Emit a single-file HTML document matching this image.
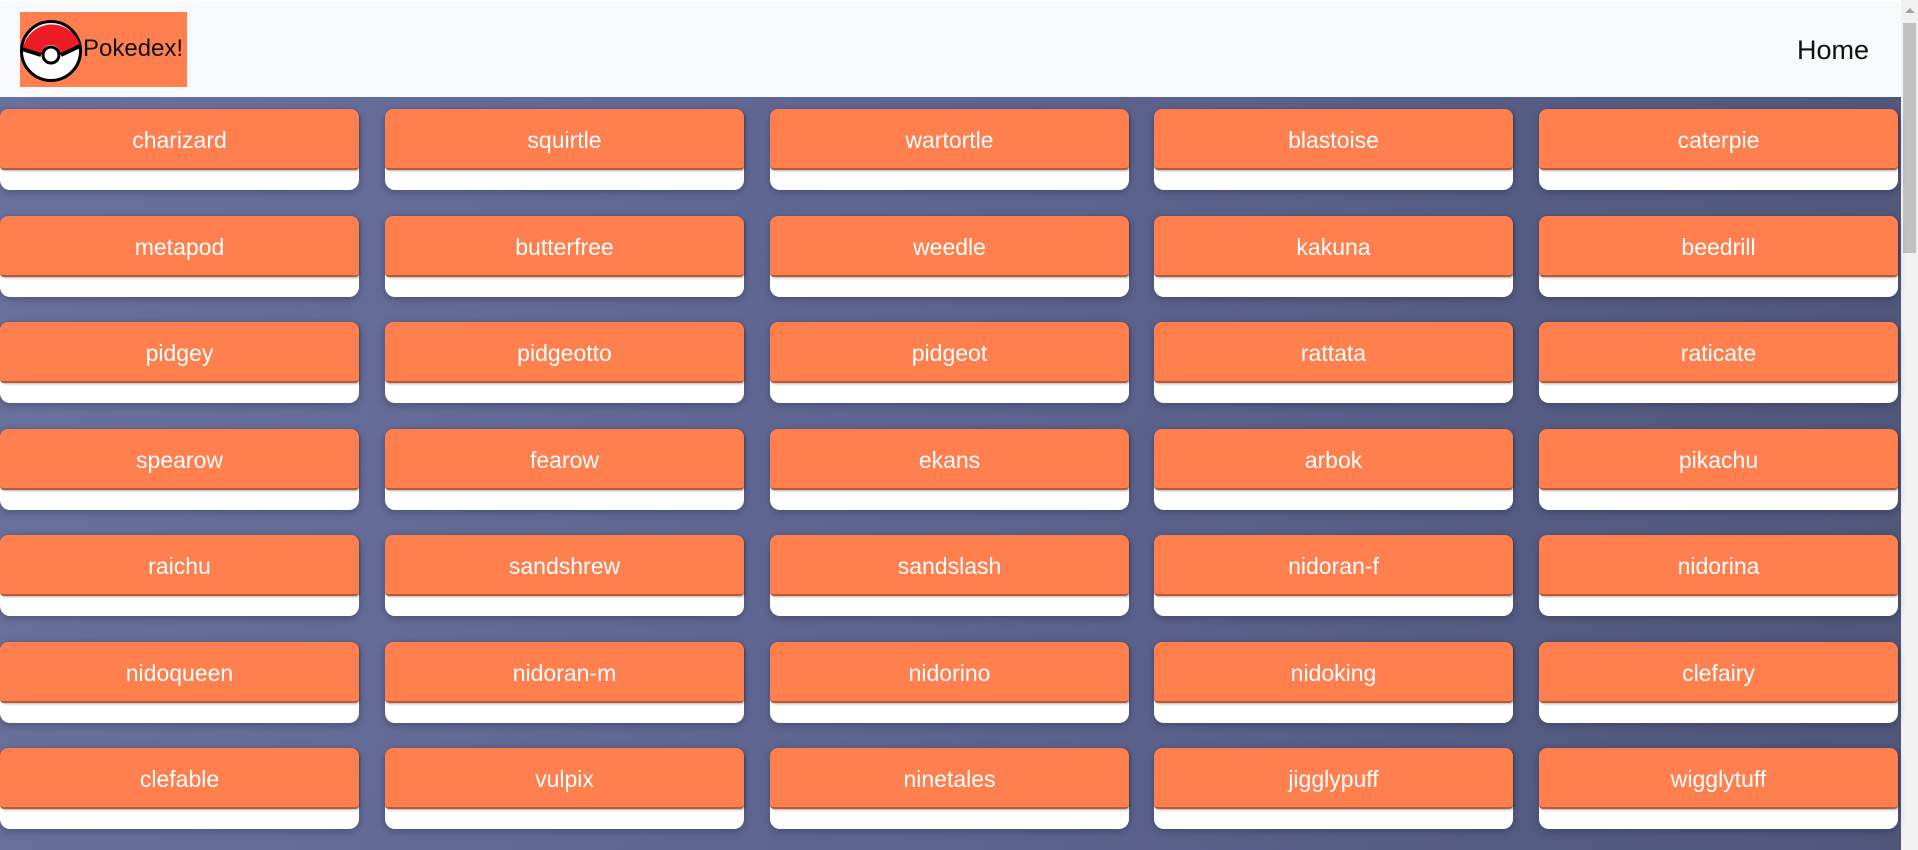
<!DOCTYPE html>
<html><head><meta charset="utf-8"><style>
*{margin:0;padding:0;box-sizing:border-box}
html,body{width:1918px;height:850px;overflow:hidden;font-family:"Liberation Sans",Arial,sans-serif}
body{background:linear-gradient(100deg,#69719d 0%,#5d6490 50%,#4f5679 100%);position:relative}
.nav{position:absolute;left:0;top:0;width:1901px;height:97px;background:#f8f9fa;border-top:2px solid #fff}
.logo{position:absolute;left:20px;top:10px;width:167px;height:75px;background:#ff7f4f}
.logo svg{position:absolute;left:0;top:5px}
.logo span{position:absolute;left:63px;top:23px;font-size:24px;color:#111}
.home{position:absolute;right:32px;top:33px;font-size:27px;color:#111}
.sb{position:absolute;left:1901px;top:0;width:17px;height:850px;background:#f1f1f1}
.sb .t{position:absolute;left:2px;top:23px;width:13px;height:230px;background:#c1c1c1}
.sb .a{position:absolute;left:4px;top:8px;border:5px solid transparent;border-bottom:5px solid #a3a3a3;border-top:0}
.card{position:absolute;width:359px;height:81px;background:#fff;border-radius:10px;box-shadow:0 2px 8px rgba(0,0,0,.25)}
.card div{height:61px;background:#ff7f4f;border-radius:8px 8px 4px 4px;border-bottom:2px solid #b85a36;box-shadow:1px 1px 2px rgba(0,0,0,.3);color:#fff;font-size:23px;text-align:center;line-height:63px}
</style></head><body>
<div class="nav">
<div class="logo"><svg width="64" height="66" viewBox="0 0 64 66"><circle cx="31" cy="34" r="29.5" fill="#fff" stroke="#000" stroke-width="3"/><path d="M2.5 34 A29.5 29.5 0 0 1 60.5 30 L40 37 A9 9 0 0 0 22 37 Z" fill="#ee1c25"/><path d="M2 32 L21 38 M41 38 L60 29" stroke="#000" stroke-width="4"/><circle cx="31" cy="38" r="8" fill="#fff" stroke="#000" stroke-width="3"/></svg><span>Pokedex!</span></div>
<div class="home">Home</div>
</div>
<div class="sb"><div class="a"></div><div class="t"></div></div>
<div id="g"></div>
<script>
var n=["charizard","squirtle","wartortle","blastoise","caterpie","metapod","butterfree","weedle","kakuna","beedrill","pidgey","pidgeotto","pidgeot","rattata","raticate","spearow","fearow","ekans","arbok","pikachu","raichu","sandshrew","sandslash","nidoran-f","nidorina","nidoqueen","nidoran-m","nidorino","nidoking","clefairy","clefable","vulpix","ninetales","jigglypuff","wigglytuff"];
var h="";n.forEach(function(s,i){var c=i%5,r=Math.floor(i/5);h+='<div class="card" style="left:'+Math.round(c*384.75)+'px;top:'+Math.round(109+r*106.5)+'px"><div>'+s+'</div></div>';});
document.getElementById("g").innerHTML=h;
</script>
</body></html>
